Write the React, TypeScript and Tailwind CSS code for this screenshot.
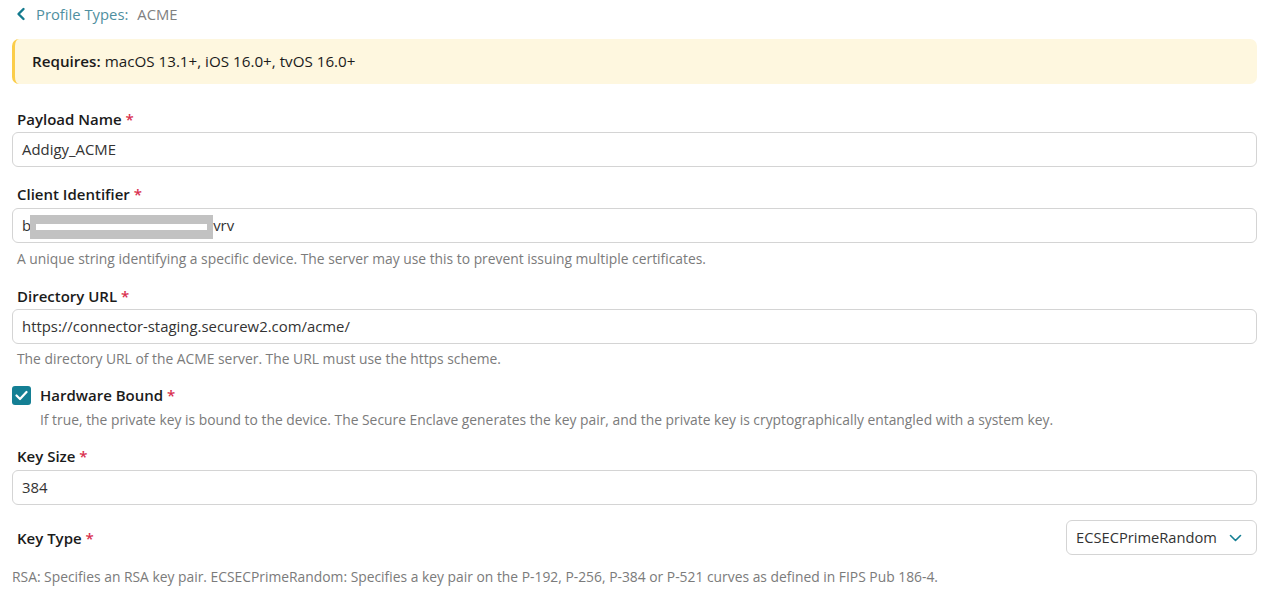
import React from "react";

const font = { fontFamily: "'Open Sans', Lato, sans-serif" };

function Label({ children }: { children: React.ReactNode }) {
  return (
    <div className="text-[15px] font-semibold text-[#1b1b1b] leading-[20px]">
      {children} <span className="text-[#d9304f]">*</span>
    </div>
  );
}

function Input({ value, children }: { value?: string; children?: React.ReactNode }) {
  return (
    <div className="h-[35px] w-full rounded-[6px] border border-[#d4d4d4] px-[9px] flex items-center text-[14.9px] text-[#333]">
      {children ?? value}
    </div>
  );
}

function Hint({ children, className = "" }: { children: React.ReactNode; className?: string }) {
  return <div className={"text-[13.85px] text-[#7b7b7b] leading-[20px] " + className}>{children}</div>;
}

export default function App() {
  return (
    <div className="w-[1267px] h-[601px] bg-white overflow-hidden pl-[12px] pr-[10px]" style={font}>
      <div className="h-[27px] flex items-center pl-[4px] pt-[1px]">
        <svg width="10" height="14" viewBox="0 0 10 14" className="mr-[10px]">
          <path d="M7.5 2 L2.5 7 L7.5 12" fill="none" stroke="#137a8e" strokeWidth="2.4" strokeLinecap="round" strokeLinejoin="round" />
        </svg>
        <span className="text-[14.8px] text-[#4f8fa0]">Profile Types:</span>
        <span className="text-[14.8px] text-[#808080] ml-[9px]">ACME</span>
      </div>
      <div className="mt-[12px] h-[45px] rounded-[7px] border-l-[3px] border-[#fbcd4a] bg-[#fef7df] flex items-center pl-[17px] text-[15.2px] text-[#1b1b1b]">
        <span className="font-semibold">Requires:</span>
        <span className="ml-[4px]">macOS 13.1+, iOS 16.0+, tvOS 16.0+</span>
      </div>

      <div className="mt-[25px] pl-[5px]">
        <Label>Payload Name</Label>
      </div>
      <div className="mt-[3px]">
        <Input value="Addigy_ACME" />
      </div>

      <div className="mt-[17px] pl-[5px]">
        <Label>Client Identifier</Label>
      </div>
      <div className="mt-[4px]">
        <Input>
          <span>b</span>
          <span className="inline-flex items-center h-[24px] w-[183px] bg-[#c2c2c2] ml-[-1px] mt-[3px] px-[6px]">
            <span className="block h-[6px] w-full bg-white" />
          </span>
          <span>vrv</span>
        </Input>
      </div>
      <Hint className="mt-[6px] pl-[5px]">
        A unique string identifying a specific device. The server may use this to prevent issuing multiple certificates.
      </Hint>

      <div className="mt-[17px] pl-[5px]">
        <Label>Directory URL</Label>
      </div>
      <div className="mt-[3px]">
        <Input value="https://connector-staging.securew2.com/acme/" />
      </div>
      <Hint className="mt-[5px] pl-[5px]">The directory URL of the ACME server. The URL must use the https scheme.</Hint>

      <div className="mt-[16px] flex items-center">
        <div className="w-[19px] h-[19px] rounded-[3px] bg-[#147f94] flex items-center justify-center">
          <svg width="13" height="11" viewBox="0 0 13 11">
            <path d="M1.5 5.5 L5 9 L11.5 2" fill="none" stroke="white" strokeWidth="2.2" strokeLinecap="round" strokeLinejoin="round" />
          </svg>
        </div>
        <div className="ml-[9px]">
          <Label>Hardware Bound</Label>
        </div>
      </div>
      <Hint className="mt-[5px] pl-[28px]">
        If true, the private key is bound to the device. The Secure Enclave generates the key pair, and the private key is cryptographically entangled with a system key.
      </Hint>

      <div className="mt-[16px] pl-[5px]">
        <Label>Key Size</Label>
      </div>
      <div className="mt-[4px]">
        <Input value="384" />
      </div>

      <div className="mt-[15px] flex items-center justify-between">
        <div className="pl-[5px]">
          <Label>Key Type</Label>
        </div>
        <div className="h-[35px] w-[191px] rounded-[6px] border border-[#d4d4d4] flex items-center justify-between pl-[9px] pr-[14px] text-[14.7px] text-[#333]">
          <span>ECSECPrimeRandom</span>
          <svg width="13" height="8" viewBox="0 0 13 8">
            <path d="M1.5 1.5 L6.5 6.5 L11.5 1.5" fill="none" stroke="#147f94" strokeWidth="1.6" strokeLinecap="round" strokeLinejoin="round" />
          </svg>
        </div>
      </div>
      <Hint className="mt-[12px]">
        RSA: Specifies an RSA key pair. ECSECPrimeRandom: Specifies a key pair on the P-192, P-256, P-384 or P-521 curves as defined in FIPS Pub 186-4.
      </Hint>
    </div>
  );
}
